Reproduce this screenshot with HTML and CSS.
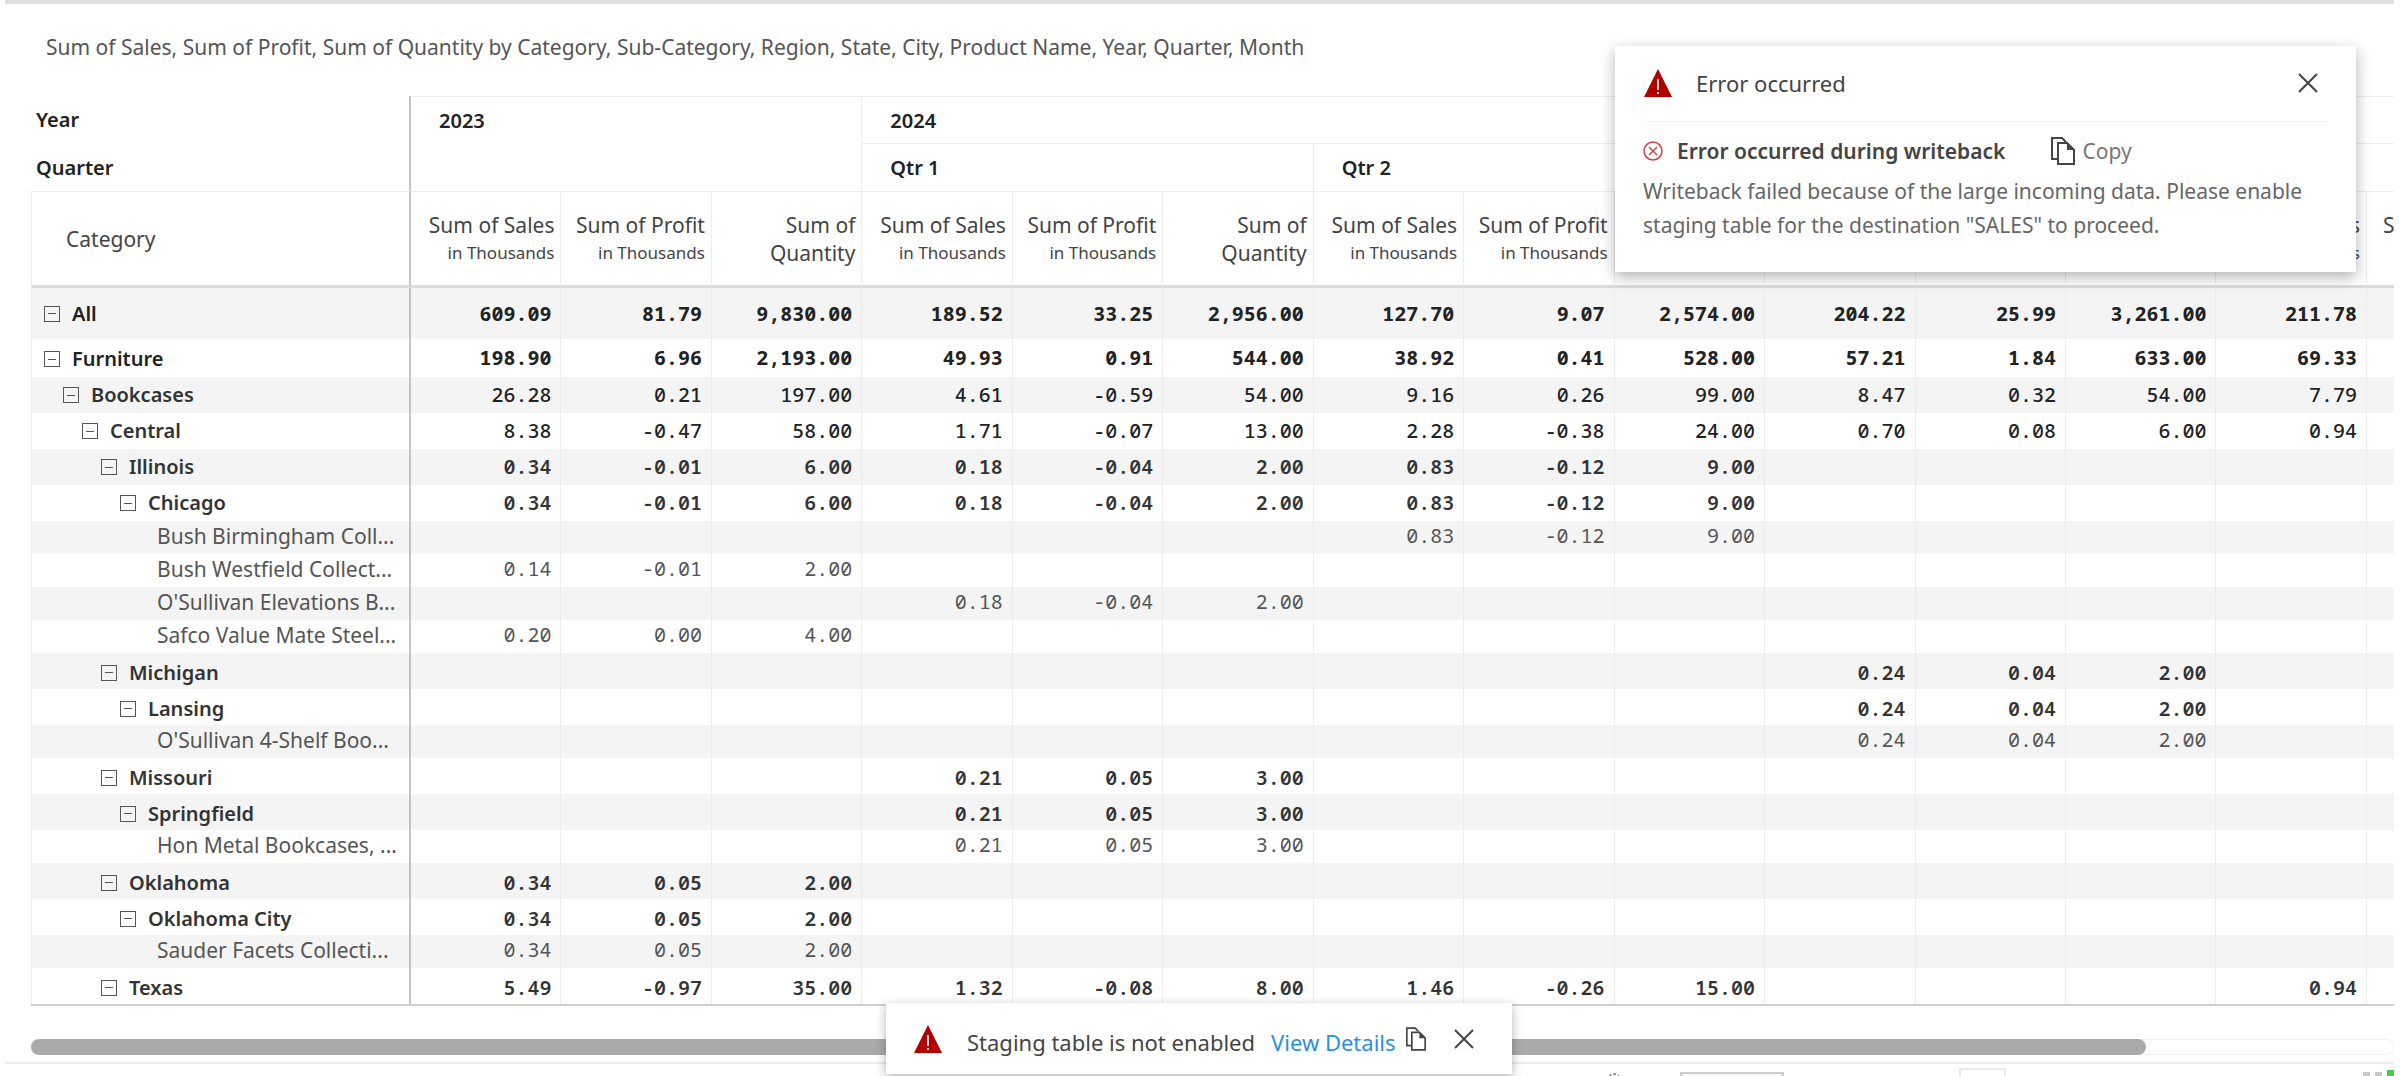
FILE: index.html
```html
<!DOCTYPE html>
<html lang="en">

<head>
    <meta charset="UTF-8">
    <meta name="viewport" content="width=device-width, initial-scale=1.0">
    <title>Sales Matrix</title>
    <link rel="stylesheet" href="styles.css">
</head>

<body>
    <!-- Shared icons -->
    <svg class="sprite" aria-hidden="true">
        <symbol id="icon-warning" viewBox="0 0 30 30">
            <path d="M15 1 L29 29 H1 Z" fill="#b00000" />
            <path d="M15 11 V22 M15 24 V26" stroke="#f0d0d0" stroke-width="2" />
        </symbol>
        <symbol id="icon-copy" viewBox="0 0 24 28">
            <path d="M7 22 H1 V1 H11 L15 5" fill="none" stroke="currentColor" stroke-width="2" />
            <path d="M7 6 H16 L23 13 V27 H7 Z" fill="#fff" stroke="currentColor" stroke-width="2" />
            <path d="M16 5 V13 H24 Z" fill="currentColor" />
        </symbol>
        <symbol id="icon-close" viewBox="0 0 20 20">
            <path d="M1 1 L19 19 M19 1 L1 19" stroke="currentColor" stroke-width="2" />
        </symbol>
        <symbol id="icon-failed" viewBox="0 0 20 20">
            <circle cx="10" cy="10" r="9" fill="none" stroke="currentColor" stroke-width="1.5" />
            <path d="M6 6 L14 14 M14 6 L6 14" stroke="currentColor" stroke-width="1.5" />
        </symbol>
    </svg>

    <main class="visual">
        <h1 class="visual-title">Sum of Sales, Sum of Profit, Sum of Quantity by Category, Sub-Category, Region, State, City, Product Name, Year, Quarter, Month</h1>

        <div class="matrix-wrap">
            <table class="matrix">
                <colgroup>
                    <col class="col-label">
                    <col span="13">
                    <col class="col-cut">
                </colgroup>
                <thead>
                    <tr class="row-year">
                        <th class="corner">Year</th>
                        <th class="group year-total" colspan="3" rowspan="2">2023</th>
                        <th class="group" colspan="11">2024</th>
                    </tr>
                    <tr class="row-quarter">
                        <th class="corner">Quarter</th>
                        <th class="group" colspan="3">Qtr 1</th>
                        <th class="group" colspan="3">Qtr 2</th>
                        <th class="group" colspan="3">Qtr 3</th>
                        <th class="group" colspan="2">Qtr 4</th>
                    </tr>
                    <tr class="row-measure" id="measures">
                        <th class="category">Category</th>
                    </tr>
                </thead>
                <tbody id="rows"></tbody>
            </table>
        </div>

        <div class="scroll-track">
            <div class="scroll-thumb"></div>
        </div>
    </main>

    <footer class="pager">
        <span class="pager-gear"></span>
        <span class="pager-select"></span>
        <span class="pager-page"></span>
        <span class="pager-dot"></span>
        <span class="pager-dot"></span>
        <span class="pager-dot live"></span>
    </footer>

    <!-- Error details -->
    <section class="error-panel" role="alertdialog" aria-labelledby="error-title">
        <header class="error-header">
            <svg class="icon-warning"><use href="#icon-warning" /></svg>
            <h2 id="error-title">Error occurred</h2>
            <button class="icon-button" type="button" aria-label="Close"><svg class="icon-close"><use href="#icon-close" /></svg></button>
        </header>
        <div class="error-summary">
            <svg class="icon-failed"><use href="#icon-failed" /></svg>
            <strong>Error occurred during writeback</strong>
            <button class="copy-button" type="button"><svg class="icon-copy"><use href="#icon-copy" /></svg>Copy</button>
        </div>
        <p>Writeback failed because of the large incoming data. Please enable staging table for the destination "SALES" to proceed.</p>
    </section>

    <!-- Toast -->
    <div class="toast" role="status">
        <svg class="icon-warning"><use href="#icon-warning" /></svg>
        <span class="toast-text">Staging table is not enabled</span>
        <a href="#error-title">View Details</a>
        <button class="icon-button" type="button" aria-label="Copy"><svg class="icon-copy-small"><use href="#icon-copy" /></svg></button>
        <button class="icon-button toast-close" type="button" aria-label="Close"><svg class="icon-close"><use href="#icon-close" /></svg></button>
    </div>

    <script>
        const LEAF = 6;

        // [level, label, values by column]; trailing blanks are left out
        const rows = [
            [0, 'All', '609.09 81.79 9,830.00 189.52 33.25 2,956.00 127.70 9.07 2,574.00 204.22 25.99 3,261.00 211.78'],
            [1, 'Furniture', '198.90 6.96 2,193.00 49.93 0.91 544.00 38.92 0.41 528.00 57.21 1.84 633.00 69.33'],
            [2, 'Bookcases', '26.28 0.21 197.00 4.61 -0.59 54.00 9.16 0.26 99.00 8.47 0.32 54.00 7.79'],
            [3, 'Central', '8.38 -0.47 58.00 1.71 -0.07 13.00 2.28 -0.38 24.00 0.70 0.08 6.00 0.94'],
            [4, 'Illinois', '0.34 -0.01 6.00 0.18 -0.04 2.00 0.83 -0.12 9.00'],
            [5, 'Chicago', '0.34 -0.01 6.00 0.18 -0.04 2.00 0.83 -0.12 9.00'],
            [6, 'Bush Birmingham Coll...', '_ _ _ _ _ _ 0.83 -0.12 9.00'],
            [6, 'Bush Westfield Collect...', '0.14 -0.01 2.00'],
            [6, "O'Sullivan Elevations B...", '_ _ _ 0.18 -0.04 2.00'],
            [6, 'Safco Value Mate Steel...', '0.20 0.00 4.00'],
            [4, 'Michigan', '_ _ _ _ _ _ _ _ _ 0.24 0.04 2.00'],
            [5, 'Lansing', '_ _ _ _ _ _ _ _ _ 0.24 0.04 2.00'],
            [6, "O'Sullivan 4-Shelf Boo...", '_ _ _ _ _ _ _ _ _ 0.24 0.04 2.00'],
            [4, 'Missouri', '_ _ _ 0.21 0.05 3.00'],
            [5, 'Springfield', '_ _ _ 0.21 0.05 3.00'],
            [6, 'Hon Metal Bookcases, ...', '_ _ _ 0.21 0.05 3.00'],
            [4, 'Oklahoma', '0.34 0.05 2.00'],
            [5, 'Oklahoma City', '0.34 0.05 2.00'],
            [6, 'Sauder Facets Collecti...', '0.34 0.05 2.00'],
            [4, 'Texas', '5.49 -0.97 35.00 1.32 -0.08 8.00 1.46 -0.26 15.00 _ _ _ 0.94']
        ];

        const measures = [
            'Sum of Sales<small>in Thousands</small>',
            'Sum of Profit<small>in Thousands</small>',
            'Sum of<br>Quantity'
        ];

        let head = '';
        for (let i = 0; i < 13; i++) {
            head += `<th>${measures[i % 3]}</th>`;
        }
        head += '<th class="cut">Sum of Profit</th>';
        document.getElementById('measures').insertAdjacentHTML('beforeend', head);

        document.getElementById('rows').innerHTML = rows.map(([level, label, text]) => {
            const values = text.split(' ');
            const toggle = level < LEAF
                ? `<button class="toggle" type="button" aria-label="Collapse ${label}"></button>`
                : '';
            let cells = '';
            for (let i = 0; i < 14; i++) {
                const value = values[i] || '';
                cells += `<td>${value === '_' ? '' : value}</td>`;
            }
            return `<tr class="level-${level}"><th scope="row"><div class="label">${toggle}${label}</div></th>${cells}</tr>`;
        }).join('');
    </script>
</body>

</html>
```

FILE: styles.css
```css
* {
    box-sizing: border-box;
}

body {
    margin: 0;
    height: 100vh;
    overflow: hidden;
    font-family: 'Noto Sans', 'Open Sans', sans-serif;
    font-size: 21px;
    color: #444;
    background-color: #fff;
}

button {
    padding: 0;
    border: none;
    background: none;
    color: inherit;
    font: inherit;
    cursor: pointer;
}

svg {
    display: block;
    flex: none;
}

.sprite {
    display: none;
}

.visual {
    margin: 0 6px;
    padding-left: 25px;
}

.visual::before {
    content: "";
    display: block;
    height: 4px;
    margin-left: -26px;
    background-color: #e0e0e0;
}

.visual-title {
    margin: 0 0 6px 15px;
    font-size: 21px;
    line-height: 86px;
    font-weight: 400;
    color: #555;
    white-space: nowrap;
}

/* Matrix */
.matrix-wrap {
    overflow: hidden;
}

.matrix {
    width: 100%;
    table-layout: fixed;
    border-collapse: separate;
    border-spacing: 0;
    border-bottom: 2px solid #d0d0d0;
}

.col-label {
    width: 380px;
}

.col-cut {
    width: 27px;
}

.matrix th,
.matrix td {
    padding: 0;
    border-right: 1px solid #ececec;
    overflow: hidden;
    white-space: nowrap;
}

.matrix tr > :last-child {
    border-right: none;
}

.matrix th:first-child {
    border-right: 2px solid #c4c4c4;
    text-align: left;
}

.matrix .corner {
    padding-left: 5px;
    font-size: 20px;
    font-weight: 600;
    color: #222;
}

.matrix .group {
    padding-left: 28px;
    border-top: 1px solid #ececec;
    text-align: left;
    font-size: 20px;
    font-weight: 600;
    color: #222;
}

.matrix .year-total {
    padding-top: 10px;
    vertical-align: top;
}

.row-year th {
    height: 47px;
}

.row-quarter th {
    height: 48px;
}

.matrix .row-measure th {
    height: 97px;
    padding-right: 6px;
    border-top: 1px solid #ececec;
    border-bottom: 3px solid #dcdcdc;
    text-align: right;
    font-weight: 400;
    line-height: 28px;
}

.matrix .row-measure .category {
    padding-left: 34px;
    border-left: 1px solid #ececec;
    text-align: left;
}

.row-measure small {
    display: block;
    font-size: 17px;
}

.matrix .row-measure .cut {
    padding: 19px 0 0 16px;
    text-align: left;
    vertical-align: top;
}

tbody th {
    border-left: 1px solid #ececec;
}

tbody tr:nth-child(odd) {
    background-color: #f4f4f4;
}

tbody tr {
    height: 36px;
}

.matrix td {
    padding-right: 9px;
    font-family: 'Noto Sans Mono', 'DejaVu Sans Mono', monospace;
    font-size: 20px;
    line-height: 28px;
    font-weight: 600;
    text-align: right;
    color: #333;
}

.label {
    display: flex;
    align-items: center;
    gap: 12px;
    font-size: 20px;
    line-height: 28px;
    font-weight: 600;
    color: #333;
}

.toggle {
    width: 16px;
    height: 16px;
    border: 1px solid #555;
    background: linear-gradient(#555, #555) center / 8px 1px no-repeat;
}

.level-0 {
    height: 51px;
}

.level-1 {
    height: 38px;
}

.matrix .level-0 td,
.matrix .level-1 td {
    font-weight: 700;
    color: #222;
}

.level-0 .label,
.level-1 .label {
    padding-left: 12px;
    color: #222;
}

.level-1 .label {
    padding-top: 2px;
}

.matrix .level-2 td,
.matrix .level-3 td {
    font-weight: 500;
    color: #222;
}

.level-2 .label {
    padding-left: 31px;
}

.level-3 .label {
    padding-left: 50px;
}

.level-4 .label {
    padding-left: 69px;
}

.level-5 .label {
    padding-left: 88px;
}

.level-6 {
    height: 33px;
}

.matrix .level-6 th,
.matrix .level-6 td {
    padding-bottom: 3px;
}

.matrix .level-6 td {
    font-weight: 400;
    color: #555;
}

.level-6 .label {
    padding-left: 125px;
    font-size: 21px;
    font-weight: 400;
    color: #555;
}

/* state and city rows below the first products */
.matrix .level-6 ~ .level-4 > *,
.matrix .level-6 ~ .level-5 > * {
    padding-top: 3px;
}

/* Horizontal scrollbar */
.scroll-track {
    height: 16px;
    margin-top: 33px;
    border: 1px solid #f0f0f0;
    border-radius: 8px;
}

.scroll-thumb {
    width: 89.6%;
    height: 16px;
    margin: -1px;
    border-radius: 8px;
    background-color: #aaa;
}

/* Pager strip */
.pager {
    display: flex;
    justify-content: flex-end;
    gap: 5px;
    height: 30px;
    margin: 7px 6px 0 5px;
    border-top: 2px solid #ececec;
}

.pager-gear {
    width: 14px;
    height: 14px;
    margin: 9px 54px 0 0;
    border: 2px dotted #888;
    border-radius: 50%;
}

.pager-select {
    width: 104px;
    margin: 8px 170px 0 0;
    border: 2px solid #ccc;
    background-color: #f4f4f4;
}

.pager-page {
    width: 47px;
    margin: 4px 352px 0 0;
    border: 2px solid #e8e8e8;
}

.pager-dot {
    width: 7px;
    margin-top: 8px;
    background-color: #c8c8c8;
}

.pager-dot.live {
    margin-top: 6px;
    background-color: #4ccb48;
}

/* Error details */
.error-panel {
    position: absolute;
    top: 46px;
    right: 44px;
    width: 741px;
    height: 226px;
    padding: 0 28px;
    background-color: #fff;
    box-shadow: 0 5px 14px rgba(0, 0, 0, 0.3);
}

.error-header {
    display: flex;
    align-items: center;
    gap: 23px;
    height: 76px;
    padding: 0 10px 2px 0;
    border-bottom: 1px solid #f2f2f2;
}

.error-header h2 {
    flex: 1;
    margin: 0;
    font-size: 22px;
    font-weight: 400;
}

.error-summary {
    display: flex;
    align-items: center;
    height: 52px;
    padding-top: 6px;
}

.error-summary strong {
    margin: 0 46px 0 14px;
    font-size: 21px;
    font-weight: 600;
}

.error-panel p {
    margin: 0;
    line-height: 34px;
    color: #666;
}

.icon-warning {
    width: 30px;
    height: 30px;
}

.icon-close {
    width: 20px;
    height: 20px;
}

.icon-failed {
    width: 20px;
    height: 20px;
    color: #cc4444;
}

.icon-copy {
    width: 24px;
    height: 28px;
    color: #444;
}

.icon-copy-small {
    width: 20px;
    height: 24px;
}

.copy-button {
    display: flex;
    align-items: center;
    gap: 7px;
    color: #777;
}

/* Toast */
.toast {
    position: absolute;
    bottom: 2px;
    left: 50%;
    display: flex;
    align-items: center;
    width: 626px;
    height: 71px;
    margin-left: -314px;
    padding: 0 28px 0 27px;
    background-color: #fff;
    box-shadow: 0 3px 10px rgba(0, 0, 0, 0.3);
    font-size: 22px;
}

.toast-text,
.toast a {
    padding-top: 6px;
}

.toast-text {
    margin: 0 16px 0 24px;
}

.toast a {
    margin-right: 10px;
    color: #2b8fe0;
    text-decoration: none;
}

.toast-close {
    margin-left: auto;
    margin-right: 10px;
}
```
